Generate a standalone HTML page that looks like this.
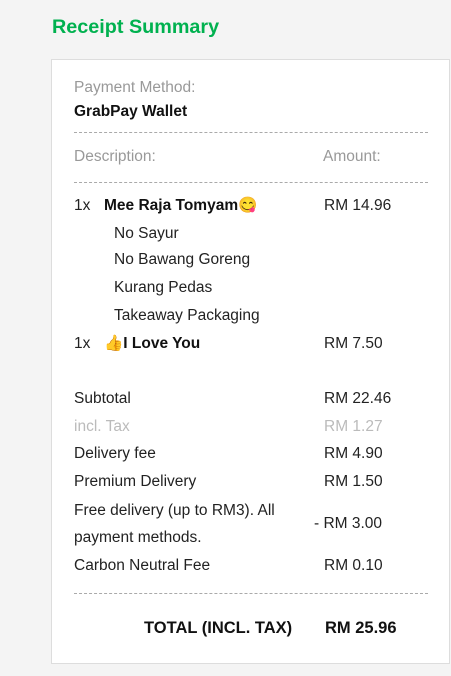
<!DOCTYPE html>
<html><head><style>
body{margin:0;background:#f4f4f4;width:451px;height:676px;position:relative;overflow:hidden;font-family:"Liberation Sans",Arial,sans-serif;font-size:15.5px;color:#222}
h1{position:absolute;left:52px;top:16px;margin:0;font-size:19.8px;color:#00b14f;font-weight:bold}
.box{position:absolute;left:51px;top:59px;width:397px;height:603px;background:#fff;border:1px solid #ddd}
.t{position:absolute;white-space:nowrap;line-height:18px}
.d{position:absolute;left:74px;width:354px;border-top:1px dashed #aaa;height:0}
.g{color:#999}.b{font-weight:bold;color:#111}.l{color:#bbb}
.tt{font-size:16.5px}
</style></head><body>
<h1>Receipt Summary</h1>
<div class="box"></div>
<div class="t g" style="left:74px;top:79px">Payment Method:</div>
<div class="t b" style="left:74px;top:103px">GrabPay Wallet</div>
<div class="d" style="top:132px"></div>
<div class="t g" style="left:74px;top:148px">Description:</div>
<div class="t g" style="left:323px;top:148px">Amount:</div>
<div class="d" style="top:182px"></div>
<div class="t" style="left:74px;top:197px">1x</div>
<div class="t b" style="left:104px;top:197px">Mee Raja Tomyam😋</div>
<div class="t" style="left:324px;top:197px">RM 14.96</div>
<div class="t" style="left:114px;top:225px">No Sayur</div>
<div class="t" style="left:114px;top:251px">No Bawang Goreng</div>
<div class="t" style="left:114px;top:279px">Kurang Pedas</div>
<div class="t" style="left:114px;top:307px">Takeaway Packaging</div>
<div class="t" style="left:74px;top:335px">1x</div>
<div class="t b" style="left:104px;top:335px">👍I Love You</div>
<div class="t" style="left:324px;top:335px">RM 7.50</div>
<div class="t" style="left:74px;top:390px">Subtotal</div><div class="t" style="left:324px;top:390px">RM 22.46</div>
<div class="t l" style="left:74px;top:418px">incl. Tax</div><div class="t l" style="left:324px;top:418px">RM 1.27</div>
<div class="t" style="left:74px;top:445px">Delivery fee</div><div class="t" style="left:324px;top:445px">RM 4.90</div>
<div class="t" style="left:74px;top:473px">Premium Delivery</div><div class="t" style="left:324px;top:473px">RM 1.50</div>
<div class="t" style="left:74px;top:502px">Free delivery (up to RM3). All</div>
<div class="t" style="left:74px;top:529px">payment methods.</div>
<div class="t" style="left:314px;top:515px">- RM 3.00</div>
<div class="t" style="left:74px;top:557px">Carbon Neutral Fee</div><div class="t" style="left:324px;top:557px">RM 0.10</div>
<div class="d" style="top:593px"></div>
<div class="t b tt" style="left:144px;top:619px">TOTAL (INCL. TAX)</div>
<div class="t b tt" style="left:325px;top:619px">RM 25.96</div>
</body></html>
